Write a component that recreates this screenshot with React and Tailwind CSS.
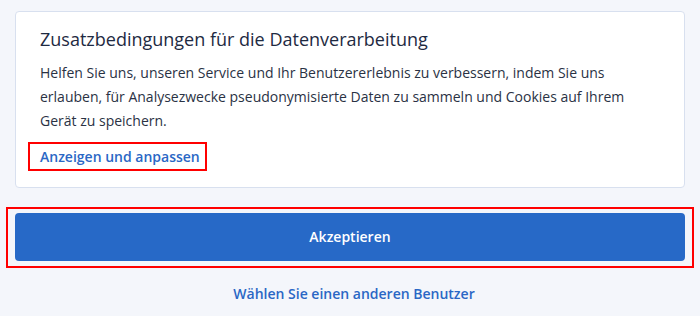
export default function App() {
  return (
    <div className="w-[700px] h-[316px] bg-[#f4f6fb] px-[15px] pt-[11px] overflow-hidden" style={{ fontFamily: '"Open Sans", sans-serif' }}>
      <div className="bg-white border border-[#d8e0ef] rounded-[4px] px-[24px] pt-[14px] pb-[16px]">
        <h2 className="text-[18px] leading-[26px] text-[#1e2a42] font-normal">Zusatzbedingungen für die Datenverarbeitung</h2>
        <p className="mt-[9px] text-[14px] leading-[24px] text-[#2a3244]">
          Helfen Sie uns, unseren Service und Ihr Benutzererlebnis zu verbessern, indem Sie uns erlauben, für Analysezwecke pseudonymisierte Daten zu sammeln und Cookies auf Ihrem Gerät zu speichern.
        </p>
        <div className="mt-[9px] -ml-[12px] inline-flex border-2 border-[#ff0000] pl-[10px] pr-[5px] h-[29px] items-center">
          <span className="text-[14px] leading-[20px] font-semibold text-[#2a67c5]">Anzeigen und anpassen</span>
        </div>
      </div>
      <div className="mt-[19px] -mx-[9px] border-2 border-[#ff0000] px-[7px] pt-[4px] pb-[5px]">
        <button className="block w-full h-[48px] rounded-[4px] bg-[#2769c7] text-white text-[14px] leading-[20px] font-semibold">Akzeptieren</button>
      </div>
      <div className="mt-[16px] pl-[8px] text-center text-[14px] leading-[20px] font-semibold text-[#2a67c5]">Wählen Sie einen anderen Benutzer</div>
    </div>
  );
}
